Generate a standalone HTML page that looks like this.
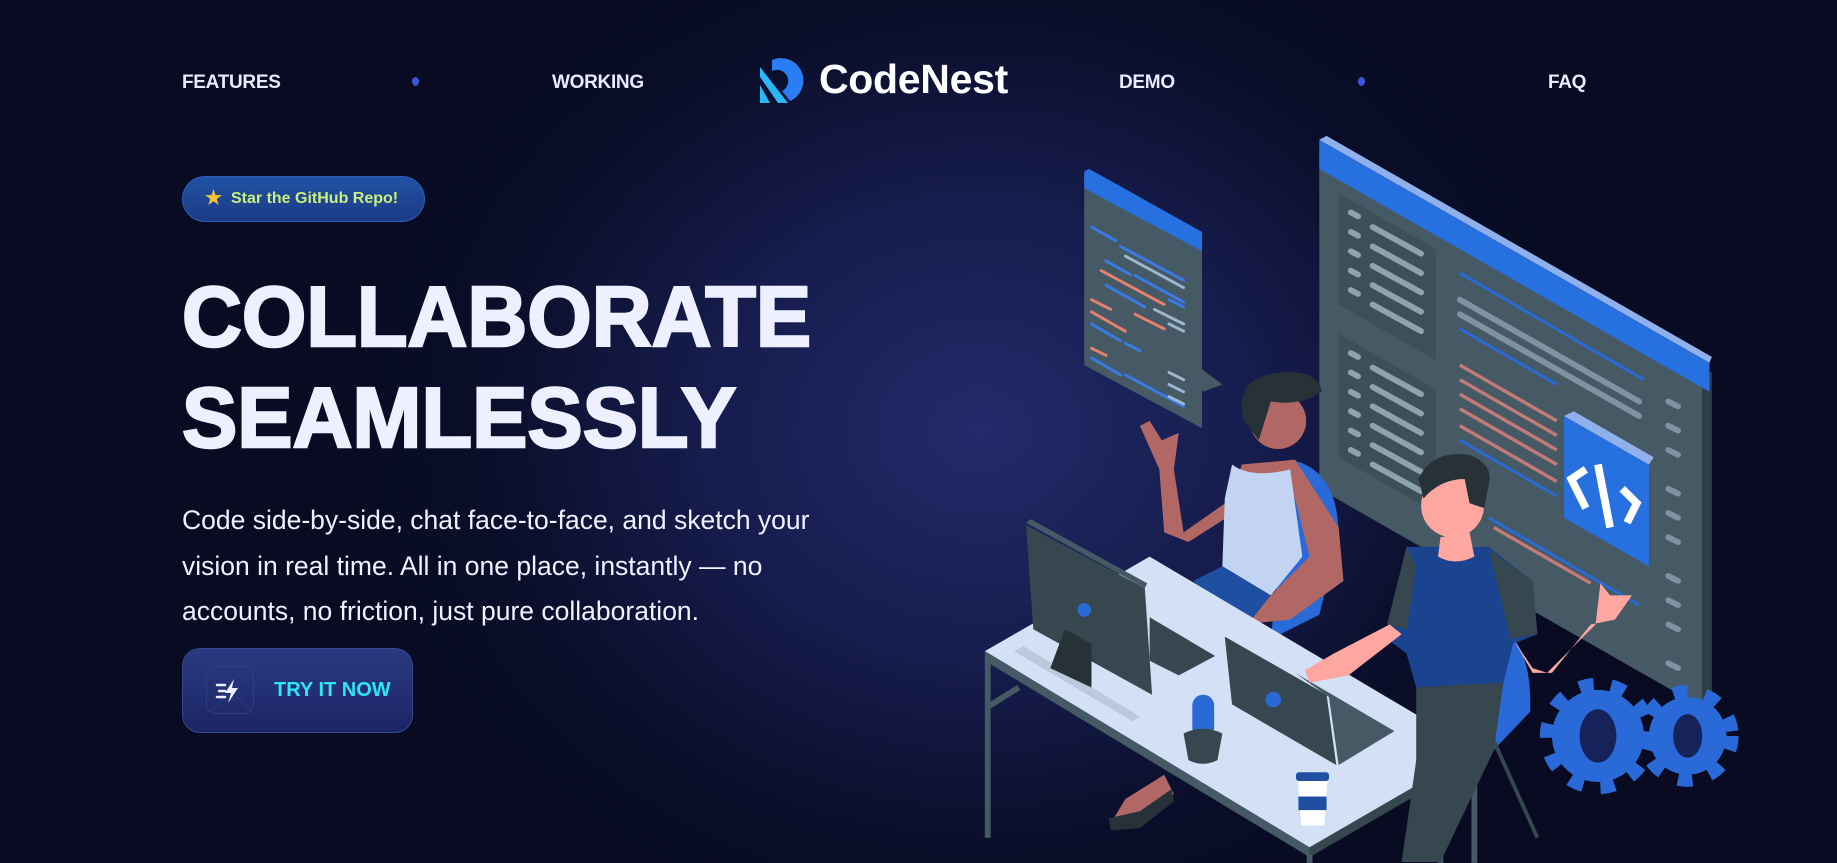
<!DOCTYPE html>
<html><head><meta charset="utf-8">
<style>
*{margin:0;padding:0;box-sizing:border-box}
html,body{width:1837px;height:863px;overflow:hidden}
body{background:radial-gradient(ellipse 620px 520px at 980px 430px,#222a6a 0%,#161c4c 45%,#0a0e2a 80%,#080b22 100%);font-family:"Liberation Sans",sans-serif;position:relative;color:#eef0ff}
.nav{position:absolute;top:72px;font-weight:bold;font-size:19px;color:#e8eaff;letter-spacing:-0.3px}
.dot{position:absolute;width:7px;height:9px;border-radius:50%;background:#3b55e0;top:77px}
.logo{position:absolute;left:819px;top:56px;font-size:41px;font-weight:bold;color:#fff;letter-spacing:-0.3px}
.badge{position:absolute;left:182px;top:176px;width:243px;height:46px;border-radius:23px;background:linear-gradient(#2152a4,#1c3a86);border:1px solid #2a5cb8;color:#c9f07c;font-size:16px;font-weight:bold;line-height:44px;padding-left:48px}
.badge .star{position:absolute;left:22px;top:0;color:#f3c13a;font-size:19px}
h1{position:absolute;left:182px;top:267px;font-size:85px;line-height:101px;font-weight:900;color:#eef0ff;transform:scaleX(0.975);transform-origin:left top;-webkit-text-stroke:2.5px #eef0ff;white-space:nowrap}
p{position:absolute;left:182px;top:498px;width:665px;font-size:26.5px;line-height:45.5px;color:#f0f2ff}
.btn{position:absolute;left:182px;top:648px;width:231px;height:85px;border-radius:18px;background:linear-gradient(#2a3a80,#1b2566);border:1px solid #35478e}
.btn .ic{position:absolute;left:23px;top:17px;width:48px;height:48px;border-radius:10px;border:1px solid #2a3f80;overflow:hidden}
.btn .tx{position:absolute;left:91px;top:30px;font-size:20px;font-weight:bold;color:#2ee4f7}
</style></head><body>
<div class="nav" style="left:182px">FEATURES</div>
<div class="dot" style="left:412px"></div>
<div class="nav" style="left:552px">WORKING</div>
<svg style="position:absolute;left:758px;top:57px" width="48" height="48" viewBox="0 0 48 48">
<path d="M14 3 A21 21 0 1 1 32 44 L24 34 A11 11 0 1 0 14 14 Z" fill="#2a7df5"/>
<path d="M2 10 L2 20 L20 46 L30 46 Z" fill="#29b8f5"/>
<path d="M2 28 L2 46 L12 46 Z" fill="#29b8f5"/>
</svg>
<div class="logo">CodeNest</div>
<div class="nav" style="left:1119px">DEMO</div>
<div class="dot" style="left:1358px"></div>
<div class="nav" style="left:1548px">FAQ</div>

<div class="badge"><span class="star">★</span>Star the GitHub Repo!</div>
<h1>COLLABORATE<br>SEAMLESSLY</h1>
<p>Code side-by-side, chat face-to-face, and sketch your vision in real time. All in one place, instantly — no accounts, no friction, just pure collaboration.</p>
<div class="btn"><div class="ic"><svg width="48" height="48" viewBox="0 0 48 48"><path d="M0 0L48 48M48 0L0 48" stroke="#25377a" stroke-width="1.5"/><circle cx="24" cy="24" r="9" fill="none" stroke="#25377a" stroke-width="1.5"/><path d="M27 12 L18 26 L24 26 L21 36 L31 21 L25 21 Z" fill="#eef0ff"/><path d="M10 18h8M12 24h6M10 30h8" stroke="#eef0ff" stroke-width="2.5" stroke-linecap="round"/></svg></div><div class="tx">TRY IT NOW</div></div>

<svg style="position:absolute;left:980px;top:130px" width="760" height="733" viewBox="0 0 1568 1512">
<polygon points="700,40 1505,500 1505,1200 700,740" fill="#455a64"/>
<polygon points="1490,490 1510,500 1510,1200 1490,1190" fill="#2f3d44"/>
<polygon points="700,20 1505,480 1505,540 700,80" fill="#2670e0"/>
<polygon points="700,20 715,12 1510,468 1505,480" fill="#8fb0ea"/>
<polygon points="740,130 940,245 940,475 740,360" fill="#3d4f57"/>
<polygon points="740,420 940,535 940,790 740,675" fill="#3d4f57"/>
<g stroke="#8fa2b0" stroke-width="12" stroke-linecap="round">
<path d="M810 200l100 55M810 240l100 55M810 280l100 55M810 320l100 55M810 360l100 55M765 170l15 8M765 210l15 8M765 250l15 8M765 290l15 8M765 330l15 8"/>
<path d="M810 490l100 55M810 530l100 55M810 570l100 55M810 610l100 55M810 650l100 55M810 690l100 55M765 460l15 8M765 500l15 8M765 540l15 8M765 580l15 8M765 620l15 8M765 660l15 8"/>
<path d="M990 350l370 210M990 380l370 210M1420 560l20 10M1420 610l20 10M1420 660l20 10M1420 740l20 10M1420 790l20 10M1420 840l20 10M1420 920l20 10M1420 970l20 10M1420 1020l20 10M1420 1100l20 10" opacity=".8"/>
</g>
<g stroke="#2a6ad8" stroke-width="6"><path d="M990 295l380 220M990 410l200 115M990 640l200 115M1050 800l310 180"/></g>
<g stroke="#c47a78" stroke-width="7"><path d="M990 485l200 115M990 515l200 115M990 545l200 115M990 575l200 115M990 610l200 115M1060 820l200 115"/></g>
<polygon points="1205,590 1380,690 1380,900 1205,800" fill="#2670e0"/>
<polygon points="1205,590 1225,580 1390,675 1380,690" fill="#8fb0ea"/>
<path d="M1250 700l-30 20 30 60M1275 690l25 130M1325 740l30 30-20 40" stroke="#fff" stroke-width="16" fill="none"/>
<polygon points="215,95 458,225 458,615 215,485" fill="#455a64"/>
<polygon points="215,85 225,80 458,210 458,250 215,120" fill="#2670e0"/>
<polygon points="440,480 500,525 460,540" fill="#455a64"/>
<g stroke-width="6" stroke-linecap="round">
<path d="M230 200l50 28M290 240l130 70M260 270l50 28M320 300l100 55M260 320l80 45M390 350l30 15M230 400l60 35M300 440l30 15M230 470l60 35M300 505l120 65" stroke="#3a7ae8"/>
<path d="M250 290l130 70M230 350l40 20M230 375l70 40M320 380l60 30M230 450l30 15" stroke="#e8806f"/>
<path d="M300 260l120 65M360 370l60 30M390 400l30 15M390 500l30 15M390 525l30 15M390 550l30 15" stroke="#9fb6d0"/>
</g>
<g fill="#2a6ad8">
<circle cx="1275" cy="1250" r="95"/><circle cx="1460" cy="1250" r="80"/>
<g stroke="#2a6ad8" stroke-width="40" stroke-dasharray="28 34"><circle cx="1275" cy="1250" r="100" fill="none"/><circle cx="1460" cy="1250" r="85" fill="none"/></g>
</g>
<ellipse cx="1275" cy="1250" rx="38" ry="55" fill="#16225a"/><ellipse cx="1460" cy="1250" rx="30" ry="45" fill="#16225a"/>
<path d="M640 680 Q740 700 740 840 L700 1000 L600 1050 Z" fill="#2a6ad8"/>
<path d="M1060 1020 Q1140 1050 1135 1200 L1040 1300 L1000 1200 Z" fill="#2a6ad8"/>
<path d="M1060 1260 L1150 1460" stroke="#37474f" stroke-width="8"/>
<path d="M330 610 L350 600 L375 640 L410 625 L400 700 L420 830 L520 760 L540 690 L650 680 L740 820 L750 930 L640 1010 L540 1020 L520 990 L600 960 L680 880 L650 760 L540 780 L430 850 L380 830 L370 700 Z" fill="#b16865"/>
<path d="M520 690 Q560 720 640 700 L665 880 L600 960 L500 900 L505 760 Z" fill="#c2d4f2"/>
<path d="M440 930 L500 900 L600 960 L560 1010 L470 970 Z" fill="#1f4fa0"/>
<circle cx="615" cy="600" r="58" fill="#b16865"/>
<path d="M545 600 Q520 510 620 500 Q700 495 705 540 Q660 570 600 560 L575 640 Z" fill="#263238"/>
<path d="M300 1380 L380 1330 L400 1370 L330 1430 L270 1430 Z" fill="#b16865"/>
<path d="M265 1420 L330 1405 L395 1360 L400 1385 L330 1440 L270 1445 Z" fill="#263238"/>
<polygon points="10,1075 350,880 1025,1280 680,1480" fill="#d3e0f5"/>
<polygon points="10,1075 680,1480 680,1500 10,1095" fill="#455a64"/>
<polygon points="680,1480 1025,1280 1025,1300 680,1500" fill="#37474f"/>
<g stroke="#455a64" stroke-width="12"><path d="M16 1090V1460M680 1495V1512M1020 1295V1512M950 1340V1512M16 1190L80 1150"/></g>
<polygon points="70,1075 90,1065 330,1210 315,1220" fill="#bcc9dc"/>
<polygon points="95,815 340,945 355,1165 110,1030" fill="#37474f"/>
<polygon points="95,810 105,803 345,935 340,945" fill="#455a64"/>
<circle cx="215" cy="990" r="14" fill="#2a6ad8"/>
<polygon points="175,1030 230,1060 230,1150 145,1110" fill="#263238"/>
<polygon points="350,1005 485,1085 410,1125 350,1095" fill="#37474f"/>
<polygon points="505,1045 715,1165 735,1310 520,1185" fill="#37474f"/>
<polygon points="650,1120 855,1240 740,1310 720,1170" fill="#455a64"/>
<circle cx="605" cy="1175" r="16" fill="#2a6ad8"/>
<rect x="438" y="1165" width="45" height="90" rx="22" fill="#2a6ad8"/>
<path d="M420 1245 Q460 1225 500 1245 L490 1300 Q460 1315 430 1300 Z" fill="#37474f"/>
<path d="M655 1330 L718 1330 L710 1435 L663 1435 Z" fill="#fff"/>
<rect x="652" y="1325" width="68" height="18" rx="6" fill="#1f4fa0"/><rect x="657" y="1375" width="58" height="28" fill="#1f4fa0"/>
<path d="M880 860 L1050 860 L1140 930 L1150 1040 L1100 1060 L1080 1140 L900 1150 L880 1080 L840 1050 Z" fill="#1b4490"/>
<path d="M880 860 L840 1020 L880 1030 L900 900 Z M1050 865 L1140 930 L1150 1040 L1095 1050 Z" fill="#37474f"/>
<path d="M845 1020 L870 1040 L760 1125 L680 1140 L670 1115 L730 1080 Z" fill="#fda7a0"/>
<path d="M1100 1050 L1140 1110 L1170 1120 L1270 1020 L1280 935 L1300 960 L1345 960 L1310 1010 L1260 1020 L1180 1120 L1140 1120 Z" fill="#fda7a0"/>
<path d="M950 840 L1010 830 L1020 880 Q980 900 945 880 Z" fill="#fda7a0"/>
<circle cx="975" cy="775" r="65" fill="#fda7a0"/>
<path d="M905 720 Q930 660 1010 670 Q1060 690 1050 730 L1040 780 L1010 770 L1000 720 Q950 720 915 760 Z" fill="#263238"/>
<path d="M900 1150 L1080 1140 L1060 1280 L950 1510 L870 1510 L900 1300 Z" fill="#37474f"/>
</svg>
</body></html>
